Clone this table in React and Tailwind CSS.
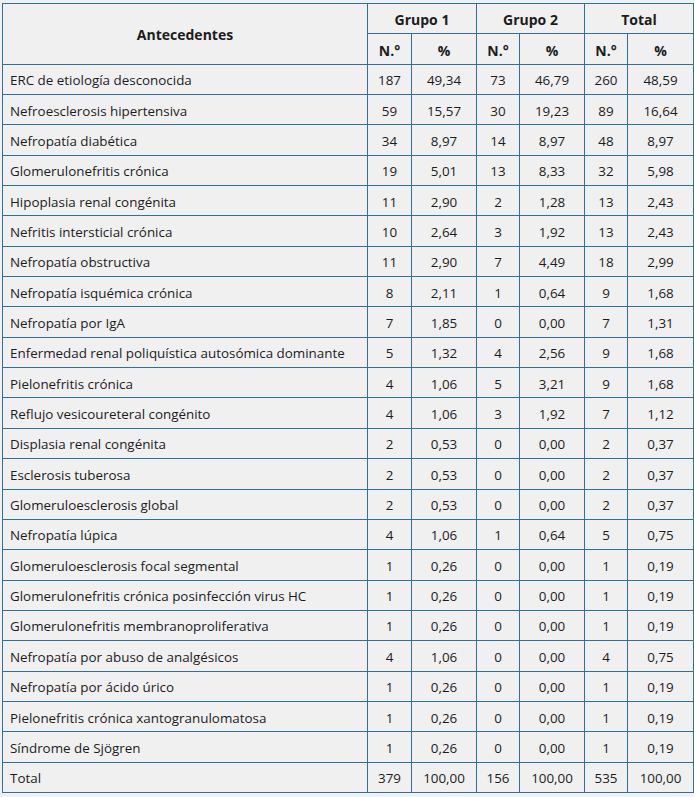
import React from 'react';

const rows = [
  ['ERC de etiología desconocida', '187', '49,34', '73', '46,79', '260', '48,59'],
  ['Nefroesclerosis hipertensiva', '59', '15,57', '30', '19,23', '89', '16,64'],
  ['Nefropatía diabética', '34', '8,97', '14', '8,97', '48', '8,97'],
  ['Glomerulonefritis crónica', '19', '5,01', '13', '8,33', '32', '5,98'],
  ['Hipoplasia renal congénita', '11', '2,90', '2', '1,28', '13', '2,43'],
  ['Nefritis intersticial crónica', '10', '2,64', '3', '1,92', '13', '2,43'],
  ['Nefropatía obstructiva', '11', '2,90', '7', '4,49', '18', '2,99'],
  ['Nefropatía isquémica crónica', '8', '2,11', '1', '0,64', '9', '1,68'],
  ['Nefropatía por IgA', '7', '1,85', '0', '0,00', '7', '1,31'],
  ['Enfermedad renal poliquística autosómica dominante', '5', '1,32', '4', '2,56', '9', '1,68'],
  ['Pielonefritis crónica', '4', '1,06', '5', '3,21', '9', '1,68'],
  ['Reflujo vesicoureteral congénito', '4', '1,06', '3', '1,92', '7', '1,12'],
  ['Displasia renal congénita', '2', '0,53', '0', '0,00', '2', '0,37'],
  ['Esclerosis tuberosa', '2', '0,53', '0', '0,00', '2', '0,37'],
  ['Glomeruloesclerosis global', '2', '0,53', '0', '0,00', '2', '0,37'],
  ['Nefropatía lúpica', '4', '1,06', '1', '0,64', '5', '0,75'],
  ['Glomeruloesclerosis focal segmental', '1', '0,26', '0', '0,00', '1', '0,19'],
  ['Glomerulonefritis crónica posinfección virus HC', '1', '0,26', '0', '0,00', '1', '0,19'],
  ['Glomerulonefritis membranoproliferativa', '1', '0,26', '0', '0,00', '1', '0,19'],
  ['Nefropatía por abuso de analgésicos', '4', '1,06', '0', '0,00', '4', '0,75'],
  ['Nefropatía por ácido úrico', '1', '0,26', '0', '0,00', '1', '0,19'],
  ['Pielonefritis crónica xantogranulomatosa', '1', '0,26', '0', '0,00', '1', '0,19'],
  ['Síndrome de Sjögren', '1', '0,26', '0', '0,00', '1', '0,19'],
  ['Total', '379', '100,00', '156', '100,00', '535', '100,00'],
];

const cell = 'border border-[#2f7098] h-[30.35px] px-0 pt-[2px] pb-0';

export default function App() {
  return (
    <div className="min-h-screen bg-[#f0f0f0] pt-[3px] pl-[2px] text-[#1c1c1c] text-[13.4px] font-['Open_Sans',sans-serif]">
      <table className="table-fixed border-collapse w-[691px]">
        <colgroup>
          <col className="w-[365px]" />
          <col className="w-[44px]" />
          <col className="w-[65px]" />
          <col className="w-[43px]" />
          <col className="w-[65px]" />
          <col className="w-[43px]" />
          <col className="w-[66px]" />
        </colgroup>
        <thead className="text-[14px]">
          <tr>
            <th rowSpan={2} className={`${cell} text-center font-bold`}>Antecedentes</th>
            <th colSpan={2} className={`${cell} text-center font-bold`}>Grupo 1</th>
            <th colSpan={2} className={`${cell} text-center font-bold`}>Grupo 2</th>
            <th colSpan={2} className={`${cell} text-center font-bold`}>Total</th>
          </tr>
          <tr>
            {['N.°', '%', 'N.°', '%', 'N.°', '%'].map((h, i) => (
              <th key={i} className={`${cell} text-center font-bold`}>{h}</th>
            ))}
          </tr>
        </thead>
        <tbody>
          {rows.map((r) => (
            <tr key={r[0]}>
              <td className={`${cell} pl-[7px] text-left`}>{r[0]}</td>
              {r.slice(1).map((v, i) => (
                <td key={i} className={`${cell} text-center`}>{v}</td>
              ))}
            </tr>
          ))}
        </tbody>
      </table>
    </div>
  );
}
